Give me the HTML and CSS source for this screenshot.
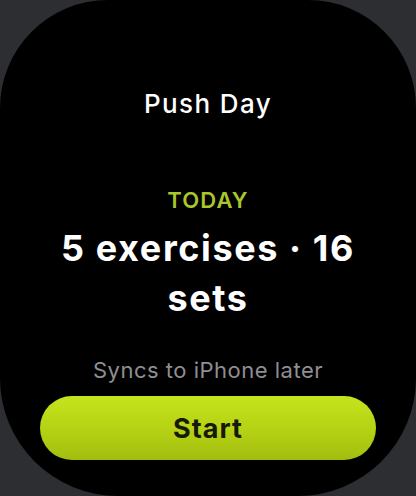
FILE: index.html
```html
<!DOCTYPE html>
<html lang="en">
<head>
<meta charset="utf-8">
<title>Push Day</title>
<link rel="stylesheet" href="styles.css">
</head>
<body>
<main class="screen">
  <h1 class="title">Push Day</h1>
  <p class="label">TODAY</p>
  <p class="summary">5 exercises · 16 sets</p>
  <p class="note">Syncs to iPhone later</p>
  <button class="start" type="button">Start</button>
</main>
</body>
</html>
```
FILE: styles.css
```css
html, body {
  margin: 0;
  padding: 0;
  background: #2c2e32;
}
body {
  width: 416px;
  height: 496px;
  overflow: hidden;
  font-family: Inter, "Noto Sans", sans-serif;
}
.screen {
  box-sizing: border-box;
  width: 416px;
  height: 496px;
  background: #000;
  border-radius: 108px 108px 118px 118px;
  display: flex;
  flex-direction: column;
  align-items: center;
  padding-top: 89px;
  text-align: center;
}
.title {
  margin: 0;
  font-size: 26px;
  line-height: 30px;
  font-weight: 500;
  color: #fff;
  letter-spacing: 1.4px;
}
.label {
  margin: 67px 0 0;
  font-size: 22px;
  line-height: 28px;
  font-weight: 600;
  color: #a9c72b;
  letter-spacing: 1.1px;
}
.summary {
  margin: 9px 0 0;
  width: 330px;
  font-size: 36px;
  line-height: 50px;
  font-weight: 700;
  color: #fff;
  letter-spacing: 1.6px;
}
.note {
  margin: 34px 0 0;
  font-size: 22px;
  line-height: 26px;
  font-weight: 400;
  color: #8e8e93;
  letter-spacing: 0.5px;
}
.start {
  margin-top: 13px;
  width: 336px;
  height: 64px;
  border: 0;
  border-radius: 32px;
  background: linear-gradient(180deg, #c6e41c 0%, #b4d114 55%, #a3bd0f 100%);
  color: #161a08;
  font-family: inherit;
  font-size: 27px;
  font-weight: 700;
  letter-spacing: 1px;
  padding: 0;
}
```
